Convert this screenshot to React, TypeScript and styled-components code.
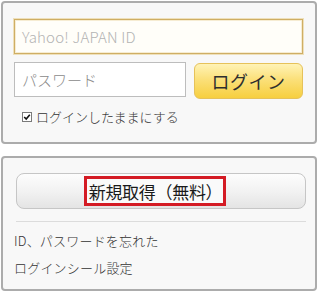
import React from "react";
import styled, { createGlobalStyle } from "styled-components";

const Global = createGlobalStyle`
  html, body { margin: 0; padding: 0; background: #ffffff; }
  body { font-family: "Noto Sans CJK JP", "Noto Sans", sans-serif; color: #333; }
`;

const Page = styled.div`
  width: 320px;
  height: 291px;
  padding: 1px 0 0 1px;
  box-sizing: border-box;
  display: flex;
  flex-direction: column;
  gap: 12px;
  overflow: hidden;
`;

const Panel = styled.div<{ $h: number }>`
  width: 316px;
  height: ${(p) => p.$h}px;
  box-sizing: border-box;
  border: 2px solid #acacac;
  border-radius: 4px;
  background: #f8f8f8;
  display: flex;
  flex-direction: column;
`;

const LoginPanel = styled(Panel)`
  padding: 16px 0 0 11px;
`;

const SignupPanel = styled(Panel)`
  padding: 15px 0 0 13px;
`;

const IdInput = styled.div`
  width: 289px;
  height: 35px;
  box-sizing: border-box;
  border: 1px solid #cfae64;
  box-shadow: 0 0 0 1px #eee0bb, inset 0 0 0 1px #f6ecd2;
  background: #fffef9;
  display: flex;
  align-items: center;
  padding-left: 7px;
  font-size: 15px;
  color: #b3b3b3;
  font-weight: 300;
  letter-spacing: 0.2px;
`;

const Row = styled.div`
  display: flex;
  gap: 8px;
  margin-top: 8px;
  align-items: flex-start;
`;

const PassInput = styled.div`
  width: 172px;
  height: 35px;
  box-sizing: border-box;
  border: 1px solid #bdbdbd;
  background: #ffffff;
  display: flex;
  align-items: center;
  padding-left: 7px;
  font-size: 15px;
  color: #8a8a8a;
  font-weight: 300;
`;

const LoginButton = styled.div`
  width: 109px;
  height: 36px;
  margin-top: 1px;
  box-sizing: border-box;
  border: 1px solid #e6c25a;
  border-radius: 6px;
  background: linear-gradient(to bottom, #fff3b6 0%, #fbe07a 45%, #f7cf3f 100%);
  display: flex;
  align-items: center;
  justify-content: center;
  font-size: 18px;
  color: #2e2e2e;
  letter-spacing: 0.5px;
`;

const KeepRow = styled.div`
  display: flex;
  align-items: center;
  gap: 4px;
  margin-top: 8px;
  padding-left: 8px;
  font-size: 13px;
  color: #333;
  font-weight: 300;
`;

const SignupButton = styled.div`
  width: 290px;
  height: 36px;
  box-sizing: border-box;
  border: 1px solid #c6c6c6;
  border-radius: 8px;
  background: linear-gradient(to bottom, #fdfdfd 0%, #f1f1f1 55%, #e4e4e4 100%);
  display: flex;
  align-items: center;
  justify-content: center;
  padding-right: 12px;
`;

const Highlight = styled.span`
  border: 3px solid #d41b24;
  height: 30px;
  box-sizing: border-box;
  display: flex;
  align-items: center;
  padding: 0 1px 0 2px;
  font-size: 17px;
  letter-spacing: -0.3px;
  color: #1a1a1a;
  background: #fafafa;
`;

const Divider = styled.div`
  width: 290px;
  height: 1px;
  background: #dcdcdc;
  margin-top: 12px;
`;

const LinkList = styled.div`
  display: flex;
  flex-direction: column;
  gap: 7px;
  margin-top: 9px;
  margin-left: -2px;
`;

const TextLink = styled.a`
  font-size: 13px;
  line-height: 20px;
  color: #333;
  text-decoration: none;
  font-weight: 300;
  letter-spacing: 0.2px;
`;

const CheckIcon = () => (
  <svg width="10" height="10" viewBox="0 0 10 10">
    <rect x="0.5" y="0.5" width="9" height="9" fill="#fff" stroke="#7a7a7a" />
    <path d="M2.2 5 L4.2 7 L7.8 2.8" fill="none" stroke="#111" strokeWidth="1.6" />
  </svg>
);

export default function App() {
  return (
    <>
      <Global />
      <Page>
        <LoginPanel $h={143}>
          <IdInput>Yahoo! JAPAN ID</IdInput>
          <Row>
            <PassInput>パスワード</PassInput>
            <LoginButton>ログイン</LoginButton>
          </Row>
          <KeepRow>
            <CheckIcon />
            <span>ログインしたままにする</span>
          </KeepRow>
        </LoginPanel>
        <SignupPanel $h={135}>
          <SignupButton>
            <Highlight>新規取得（無料）</Highlight>
          </SignupButton>
          <Divider />
          <LinkList>
            <TextLink>ID、パスワードを忘れた</TextLink>
            <TextLink>ログインシール設定</TextLink>
          </LinkList>
        </SignupPanel>
      </Page>
    </>
  );
}
